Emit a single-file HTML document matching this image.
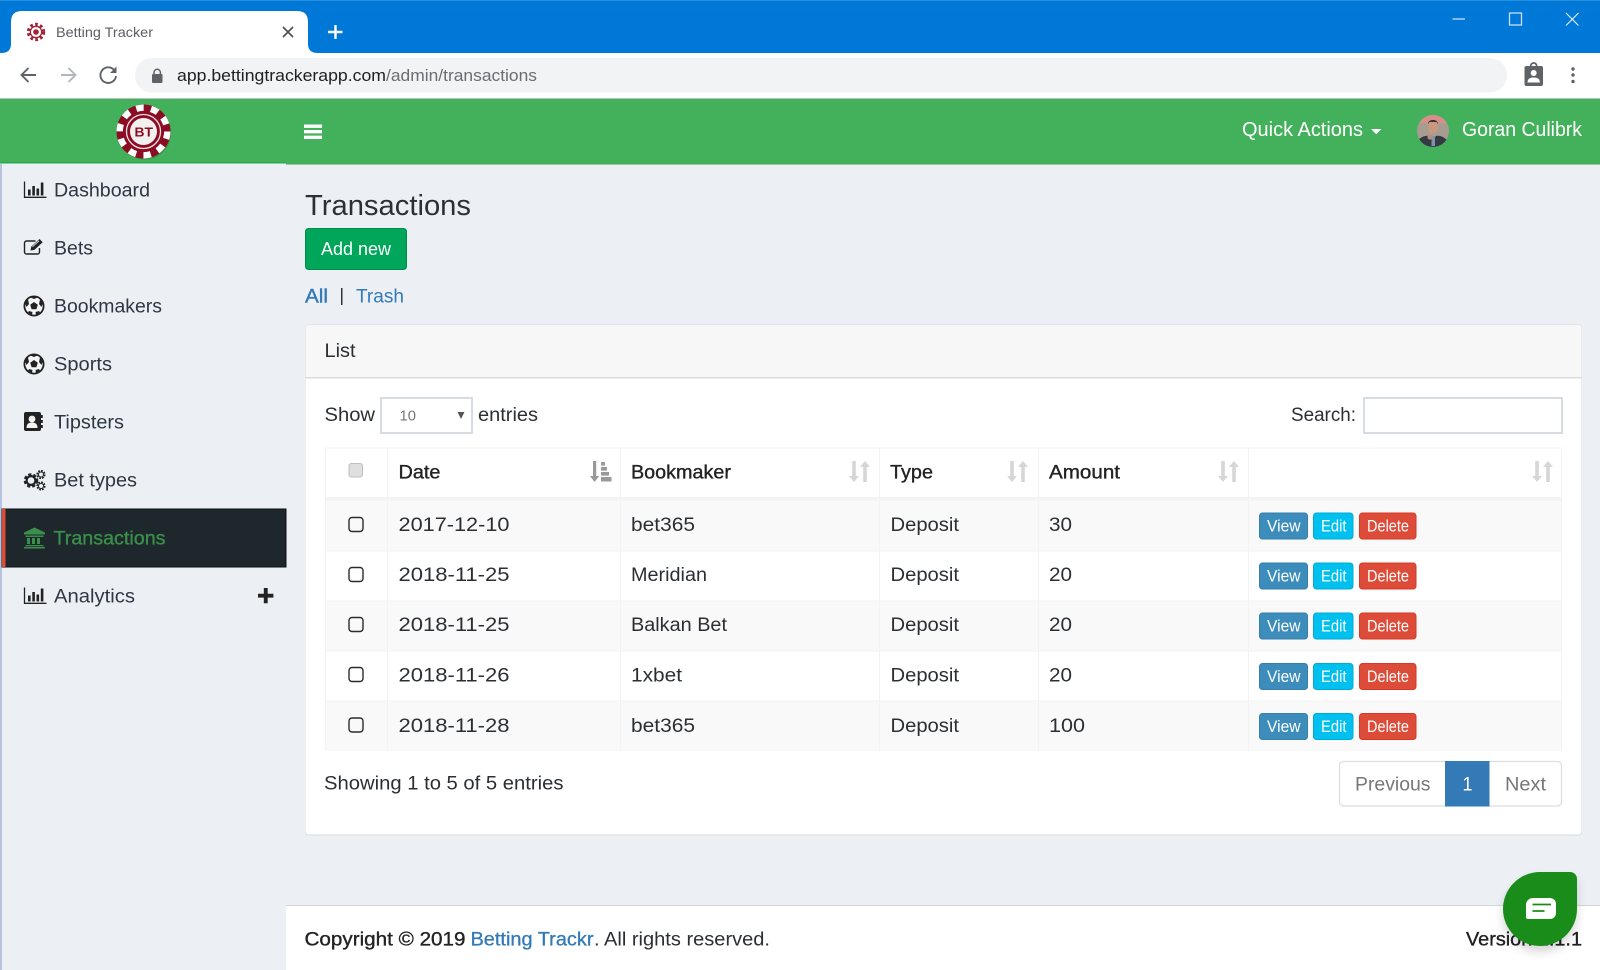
<!DOCTYPE html>
<html lang="en"><head><meta charset="utf-8"><title>Betting Tracker</title>
<style>
html,body{margin:0;padding:0;width:1600px;height:970px;overflow:hidden;background:#ecf0f5}
svg{display:block}
text{font-family:"Liberation Sans",sans-serif;font-size:19px;fill:#2b2f33;white-space:pre}
.s{fill:#2f3742}.w{fill:#fff}.l{fill:#337ab7}.h{stroke:#222;stroke-width:.35px;fill:#222}
.b{font-size:16.5px;fill:#fff}
.ic{fill:#222}
</style></head><body>
<svg width="1600" height="970" viewBox="0 0 1600 970" xmlns="http://www.w3.org/2000/svg">
<defs>
<symbol id="sort" viewBox="0 0 21 21" width="21" height="21">
<path d="M3.2 0h3.6v15h3.2l-5 6-5-6h3.200zM14.200 21h3.600V6H21l-5-6-5 6h3.200z" fill="#d6d6d6"/>
</symbol>
<symbol id="ball" viewBox="0 0 22 22" width="22" height="22">
<circle cx="11" cy="11" r="9.600" fill="#f4f5f7" stroke="#222" stroke-width="1.800"/>
<path d="M11 7l3.800 2.800-1.400 4.500H8.600L7.200 9.800z" fill="#222"/>
<path d="M7.500 2.500L11 4l3.500-1.500L11 1zM2 8l1.500 4L6 9 5 4.500zM20 8l-1.500 4L16 9l1-4.500zM5 17.500l4 2.500 .5-3-3.500-1zM17 17.500L13 20l-.5-3 3.500-1z" fill="#222"/>
</symbol>
<symbol id="chart" viewBox="0 0 23 18" width="23" height="18">
<path d="M1 1v15.800h22" fill="none" stroke="#222" stroke-width="1.300"/>
<path d="M4.500 9h2.600v6H4.500zM8.800 5.500h2.600V15H8.800zM13 8h2.600v7H13zM17.300 2h2.600v13h-2.600z" fill="#222"/>
</symbol>
</defs>

<!-- page base -->
<rect width="1600" height="970" fill="#ecf0f5"/>

<!-- browser chrome -->
<rect width="1600" height="53" fill="#0078d7"/>
<rect width="1600" height="1" fill="#2a8ede"/>
<rect y="53" width="1600" height="45" fill="#fff"/>
<rect y="98" width="1600" height="1" fill="#b9c1bb"/>
<path d="M1 53q10 0 10-9V22q0-11 11-11H297q11 0 11 11V44q0 9 10 9z" fill="#fff"/>
<!-- favicon -->
<g transform="translate(36 32)">
<circle r="7.500" fill="none" stroke="#a2223a" stroke-width="3.400" stroke-dasharray="2.600 2.300"/>
<circle r="5.700" fill="#fff" stroke="#a2223a" stroke-width="1.300"/>
<circle r="2.800" fill="#a2223a"/>
</g>
<text x="56" y="37" textLength="97" lengthAdjust="spacingAndGlyphs" style="font-size:14px;fill:#5a5e63">Betting Tracker</text>
<path d="M283 27l10 10M293 27l-10 10" stroke="#4b4f53" stroke-width="1.600" fill="none"/>
<path d="M335.500 26v14M328 33h14.500" stroke="#fff" stroke-width="2.400" fill="none" transform="translate(0 -1)"/>
<!-- nav icons -->
<path d="M36 75H22M28.500 68l-7 7 7 7" stroke="#5f6368" stroke-width="1.900" fill="none"/>
<path d="M61 75h14M68.500 68l7 7-7 7" stroke="#b4b7ba" stroke-width="1.900" fill="none"/>
<path d="M114.500 70.500A7.800 7.800 0 1 0 116 76" stroke="#5f6368" stroke-width="1.900" fill="none"/>
<path d="M116.500 66.500v6.500H110z" fill="#5f6368"/>
<rect x="135" y="58" width="1372" height="34.500" rx="17" fill="#f1f3f4"/>
<rect x="152" y="74" width="10.500" height="9" rx="1" fill="#5f6368"/>
<path d="M154 74.500v-2a3.200 3.200 0 0 1 6.400 0v2" stroke="#5f6368" stroke-width="1.500" fill="none"/>
<text x="177" y="81" textLength="209" lengthAdjust="spacingAndGlyphs" style="font-size:17px;fill:#202124">app.bettingtrackerapp.com</text>
<text x="386" y="81" textLength="151" lengthAdjust="spacingAndGlyphs" style="font-size:17px;fill:#6a6e73">/admin/transactions</text>
<!-- extension + menu -->
<rect x="1524.500" y="66" width="18.500" height="20" rx="2" fill="#5f6368"/>
<circle cx="1533.700" cy="66" r="3" fill="none" stroke="#5f6368" stroke-width="1.700"/>
<circle cx="1533.700" cy="73" r="3" fill="#fff"/>
<path d="M1527.500 82.500c0-4 3-5 6.200-5s6.200 1 6.200 5z" fill="#fff"/>
<circle cx="1573" cy="69" r="1.700" fill="#5f6368"/><circle cx="1573" cy="75" r="1.700" fill="#5f6368"/><circle cx="1573" cy="81.500" r="1.700" fill="#5f6368"/>
<!-- window controls -->
<path d="M1452.500 19h12.500" stroke="#d5e7f7" stroke-width="1.200"/>
<rect x="1509.500" y="13" width="12" height="12" fill="none" stroke="#c9def2" stroke-width="1.300"/>
<path d="M1566 13l12.500 12.500M1578.500 13L1566 25.500" stroke="#e2eef9" stroke-width="1.200"/>

<!-- app header -->
<rect y="99" width="1600" height="65" fill="#43b15b"/>
<rect y="162" width="286" height="1.500" fill="#29ad4c"/>
<rect y="163.500" width="286" height="2" fill="#ecf0f5"/>
<rect x="286" y="164" width="1314" height="1" fill="#8ed09d"/>
<!-- logo -->
<g transform="translate(143.500 131.500)">
<circle r="26.500" cx="1" cy="1.500" fill="#2a6b3a" opacity=".45"/>
<circle r="27" fill="#8b0d24"/>
<circle r="23.800" fill="none" stroke="#fff" stroke-width="6.400" stroke-dasharray="7.500 7.450"/>
<circle r="19.500" fill="#8b0d24"/>
<circle r="17" fill="none" stroke="#f3dfe2" stroke-width="1.300"/>
<circle r="13.500" fill="#f2efef"/>
</g>
<text x="134.500" y="136.500" textLength="18.500" lengthAdjust="spacingAndGlyphs" style="font-size:13px;font-weight:700;fill:#8b0d24">BT</text>
<!-- hamburger -->
<path d="M304 124.500h18v3.400h-18zM304 130h18v3.400h-18zM304 135.600h18v3.400h-18z" fill="#fff"/>
<text class="w" x="1242" y="136" textLength="121" lengthAdjust="spacingAndGlyphs" style="font-size:20px">Quick Actions</text>
<path d="M1371 129h10.500l-5.250 5.200z" fill="#fff"/>
<!-- avatar -->
<clipPath id="av"><circle cx="1433" cy="131" r="16"/></clipPath>
<g clip-path="url(#av)">
<rect x="1417" y="115" width="32" height="32" fill="#a89c92"/>
<rect x="1417" y="115" width="32" height="8" fill="#d98e8a"/>
<ellipse cx="1433" cy="127" rx="5" ry="6.500" fill="#c79a80"/>
<path d="M1428 124c0-5.500 10-5.500 10 0l-1.500-2h-7z" fill="#3e342e"/>
<path d="M1417 147v-6c4-4 8-6 13-5l3 3 3-3c5-1 9 2 13 6v5z" fill="#333a43"/>
<rect x="1431.500" y="136" width="3.500" height="10" fill="#7e94a6"/>
<circle cx="1430" cy="137" r="2.600" fill="#b98d78"/>
</g>
<text class="w" x="1462" y="136" textLength="120" lengthAdjust="spacingAndGlyphs" style="font-size:20px">Goran Culibrk</text>

<!-- sidebar -->
<rect x="0" y="164" width="2" height="806" fill="#b9c4df"/>
<use href="#chart" x="23.500" y="180.500"/>
<text class="s" x="54" y="196.500" textLength="96" lengthAdjust="spacingAndGlyphs">Dashboard</text>

<path d="M39.500 248v4a2 2 0 0 1-2 2H26.500a2 2 0 0 1-2-2V243a2 2 0 0 1 2-2h9" fill="none" stroke="#222" stroke-width="1.400"/>
<path d="M30.500 250.500l.7-3.800 8.300-7.700 3.200 3.200-8.300 7.700z" fill="#222"/>
<path d="M32.500 246.800l6.500-6" stroke="#ecf0f5" stroke-width=".8" fill="none"/>
<text class="s" x="54" y="254.500" textLength="39" lengthAdjust="spacingAndGlyphs">Bets</text>

<use href="#ball" x="23" y="295"/>
<text class="s" x="54" y="312.500" textLength="108" lengthAdjust="spacingAndGlyphs">Bookmakers</text>

<use href="#ball" x="23" y="353"/>
<text class="s" x="54" y="370.500" textLength="58" lengthAdjust="spacingAndGlyphs">Sports</text>

<rect x="24" y="412" width="17" height="19" rx="2" fill="#222"/>
<path d="M41 415h1.800v3H41zM41 420h1.800v3H41zM41 425h1.800v3H41z" fill="#222"/>
<circle cx="32" cy="419" r="3.400" fill="#f3f3f3"/>
<path d="M26.500 428c0-4.500 2.500-5.500 5.500-5.500s5.500 1 5.500 5.500z" fill="#f3f3f3"/>
<text class="s" x="54" y="428.500" textLength="70" lengthAdjust="spacingAndGlyphs">Tipsters</text>

<g fill="none" stroke="#222">
<circle cx="31" cy="480.500" r="5.800" stroke-width="3" stroke-dasharray="3 1.900"/>
<circle cx="31" cy="480.500" r="4.400" stroke-width="2.200"/>
<circle cx="41" cy="474.500" r="3.700" stroke-width="1.800" stroke-dasharray="1.800 1.100"/>
<circle cx="41" cy="474.500" r="2.500" stroke-width="1"/>
<circle cx="41" cy="486" r="3.700" stroke-width="1.800" stroke-dasharray="1.800 1.100"/>
<circle cx="41" cy="486" r="2.500" stroke-width="1"/>
</g>
<text class="s" x="54" y="486.500" textLength="83" lengthAdjust="spacingAndGlyphs">Bet types</text>

<rect x="2" y="509" width="284" height="58" fill="#1e282c"/>
<path d="M2 509h284v58H2z" fill="none" stroke="#0c1113" stroke-width="1"/>
<rect x="2" y="509" width="3.500" height="58" fill="#dd4b39"/>
<path d="M34.500 527.500l10.500 5v2H24v-2zM25.500 535.500h18v1.500h-18zM27 538h3v6h-3zM32 538h3v6h-3zM37 538h3v6h-3zM25.500 545h18v1.300h-18zM24 547h21v1.500H24z" fill="#3a8f4a"/>
<text x="53.500" y="544.500" textLength="112" lengthAdjust="spacingAndGlyphs" style="fill:#3a8f4a;stroke:#3a8f4a;stroke-width:.35px">Transactions</text>

<use href="#chart" x="23.500" y="586.500"/>
<text class="s" x="54" y="602.500" textLength="81" lengthAdjust="spacingAndGlyphs">Analytics</text>
<path d="M263.800 588h3.900v5.700h5.700v3.900h-5.700v5.700h-3.900v-5.700H258v-3.900h5.800z" fill="#222"/>

<!-- content head -->
<text x="305" y="215" textLength="166" lengthAdjust="spacingAndGlyphs" style="font-size:29px;fill:#2c3036">Transactions</text>
<rect x="305.500" y="228.500" width="101" height="41" rx="3" fill="#00a65a" stroke="#008d4c" stroke-width="1"/>
<text class="w" x="321" y="255" textLength="70" lengthAdjust="spacingAndGlyphs" style="font-size:18px">Add new</text>
<text class="l" x="305" y="302.500" textLength="23" lengthAdjust="spacingAndGlyphs" style="stroke:#337ab7;stroke-width:.4px">All</text>
<rect x="341" y="288" width="1.500" height="17" fill="#333"/>
<text class="l" x="356" y="302.500" textLength="48" lengthAdjust="spacingAndGlyphs">Trash</text>

<!-- card -->
<rect x="305" y="324.500" width="1277" height="511" rx="3" fill="#d9dde3"/>
<rect x="305.500" y="325" width="1276" height="509.500" rx="3" fill="#fff"/>
<path d="M305.500 328a3 3 0 0 1 3-3h1270a3 3 0 0 1 3 3v49H305.500z" fill="#f7f7f7"/>
<rect x="305" y="377" width="1277" height="1.500" fill="#dcdcdc"/>
<text x="324.500" y="357" textLength="31" lengthAdjust="spacingAndGlyphs">List</text>

<text x="324.500" y="421" textLength="50.500" lengthAdjust="spacingAndGlyphs">Show</text>
<rect x="381" y="398" width="91" height="35" fill="#fff" stroke="#d7dbe2" stroke-width="2"/>
<text x="399.500" y="420.500" textLength="16.500" lengthAdjust="spacingAndGlyphs" style="font-size:14.500px;fill:#777">10</text>
<path d="M457.500 412h7l-3.500 7z" fill="#555"/>
<text x="478" y="421" textLength="60" lengthAdjust="spacingAndGlyphs">entries</text>
<text x="1291" y="421" textLength="65" lengthAdjust="spacingAndGlyphs">Search:</text>
<rect x="1364" y="398" width="198" height="35" fill="#fff" stroke="#d7dbe2" stroke-width="2"/>

<!-- table -->
<rect x="325" y="448" width="1237" height="303" fill="#fff"/>
<rect x="325" y="500" width="1237" height="51" fill="#f9f9f9"/>
<rect x="325" y="601" width="1237" height="50" fill="#f9f9f9"/>
<rect x="325" y="701" width="1237" height="50" fill="#f9f9f9"/>
<g fill="#f3f3f3">
<rect x="325" y="447.500" width="1237" height="1"/>
<rect x="325" y="497" width="1237" height="3.500"/>
<rect x="325" y="550.500" width="1237" height="1"/>
<rect x="325" y="600.500" width="1237" height="1"/>
<rect x="325" y="650.500" width="1237" height="1"/>
<rect x="325" y="700.500" width="1237" height="1"/>
<rect x="387" y="448" width="1" height="303"/>
<rect x="620" y="448" width="1" height="303"/>
<rect x="879" y="448" width="1" height="303"/>
<rect x="1038" y="448" width="1" height="303"/>
<rect x="1248" y="448" width="1" height="303"/>
<rect x="325" y="448" width="1" height="303"/>
<rect x="1561" y="448" width="1" height="303"/>
</g>
<!-- header row -->
<rect x="349" y="463.500" width="13.500" height="13.500" rx="2.500" fill="#dfdfdf" stroke="#bdbdbd" stroke-width="1"/>
<text class="h" x="398.500" y="478.500" textLength="42" lengthAdjust="spacingAndGlyphs">Date</text>
<text class="h" x="631" y="478.500" textLength="100" lengthAdjust="spacingAndGlyphs">Bookmaker</text>
<text class="h" x="890" y="478.500" textLength="43" lengthAdjust="spacingAndGlyphs">Type</text>
<text class="h" x="1049" y="478.500" textLength="71" lengthAdjust="spacingAndGlyphs">Amount</text>
<path d="M593 461h3.200v15h3l-4.600 6-4.600-6h3zM601 462h4v3.600h-4zM601 467h6v3.600h-6zM601 472h8v3.600h-8zM601 477h10.500v4.500H601z" fill="#9a9a9a"/>
<use href="#sort" x="849" y="461"/>
<use href="#sort" x="1007" y="461"/>
<use href="#sort" x="1218" y="461"/>
<use href="#sort" x="1532" y="461"/>

<!-- rows -->
<g fill="none" stroke="#2b2b2b" stroke-width="1.400">
<rect x="349" y="517.500" width="14" height="14" rx="3"/>
<rect x="349" y="567.500" width="14" height="14" rx="3"/>
<rect x="349" y="617.500" width="14" height="14" rx="3"/>
<rect x="349" y="667.500" width="14" height="14" rx="3"/>
<rect x="349" y="718" width="14" height="14" rx="3"/>
</g>
<text x="398.500" y="531" textLength="111" lengthAdjust="spacingAndGlyphs">2017-12-10</text>
<text x="631" y="531" textLength="64" lengthAdjust="spacingAndGlyphs">bet365</text>
<text x="890.500" y="531" textLength="68.500" lengthAdjust="spacingAndGlyphs">Deposit</text>
<text x="1049" y="531" textLength="23" lengthAdjust="spacingAndGlyphs">30</text>

<text x="398.500" y="581" textLength="111" lengthAdjust="spacingAndGlyphs">2018-11-25</text>
<text x="631" y="581" textLength="76" lengthAdjust="spacingAndGlyphs">Meridian</text>
<text x="890.500" y="581" textLength="68.500" lengthAdjust="spacingAndGlyphs">Deposit</text>
<text x="1049" y="581" textLength="23" lengthAdjust="spacingAndGlyphs">20</text>

<text x="398.500" y="631" textLength="111" lengthAdjust="spacingAndGlyphs">2018-11-25</text>
<text x="631" y="631" textLength="96" lengthAdjust="spacingAndGlyphs">Balkan Bet</text>
<text x="890.500" y="631" textLength="68.500" lengthAdjust="spacingAndGlyphs">Deposit</text>
<text x="1049" y="631" textLength="23" lengthAdjust="spacingAndGlyphs">20</text>

<text x="398.500" y="681.500" textLength="111" lengthAdjust="spacingAndGlyphs">2018-11-26</text>
<text x="631" y="681.500" textLength="51" lengthAdjust="spacingAndGlyphs">1xbet</text>
<text x="890.500" y="681.500" textLength="68.500" lengthAdjust="spacingAndGlyphs">Deposit</text>
<text x="1049" y="681.500" textLength="23" lengthAdjust="spacingAndGlyphs">20</text>

<text x="398.500" y="732" textLength="111" lengthAdjust="spacingAndGlyphs">2018-11-28</text>
<text x="631" y="732" textLength="64" lengthAdjust="spacingAndGlyphs">bet365</text>
<text x="890.500" y="732" textLength="68.500" lengthAdjust="spacingAndGlyphs">Deposit</text>
<text x="1049" y="732" textLength="36" lengthAdjust="spacingAndGlyphs">100</text>

<!-- action buttons -->
<g stroke-width="1">
<rect x="1259.500" y="513" width="48" height="26" rx="3" fill="#3c8dbc" stroke="#367fa9"/>
<rect x="1313.500" y="513" width="39.500" height="26" rx="3" fill="#00c0ef" stroke="#00acd6"/>
<rect x="1359.500" y="513" width="56.500" height="26" rx="3" fill="#dd4b39" stroke="#d73925"/>
<rect x="1259.500" y="563" width="48" height="26" rx="3" fill="#3c8dbc" stroke="#367fa9"/>
<rect x="1313.500" y="563" width="39.500" height="26" rx="3" fill="#00c0ef" stroke="#00acd6"/>
<rect x="1359.500" y="563" width="56.500" height="26" rx="3" fill="#dd4b39" stroke="#d73925"/>
<rect x="1259.500" y="613" width="48" height="26" rx="3" fill="#3c8dbc" stroke="#367fa9"/>
<rect x="1313.500" y="613" width="39.500" height="26" rx="3" fill="#00c0ef" stroke="#00acd6"/>
<rect x="1359.500" y="613" width="56.500" height="26" rx="3" fill="#dd4b39" stroke="#d73925"/>
<rect x="1259.500" y="663.500" width="48" height="26" rx="3" fill="#3c8dbc" stroke="#367fa9"/>
<rect x="1313.500" y="663.500" width="39.500" height="26" rx="3" fill="#00c0ef" stroke="#00acd6"/>
<rect x="1359.500" y="663.500" width="56.500" height="26" rx="3" fill="#dd4b39" stroke="#d73925"/>
<rect x="1259.500" y="713.500" width="48" height="26" rx="3" fill="#3c8dbc" stroke="#367fa9"/>
<rect x="1313.500" y="713.500" width="39.500" height="26" rx="3" fill="#00c0ef" stroke="#00acd6"/>
<rect x="1359.500" y="713.500" width="56.500" height="26" rx="3" fill="#dd4b39" stroke="#d73925"/>
</g>
<text class="b" x="1267" y="531.500" textLength="33.500" lengthAdjust="spacingAndGlyphs">View</text>
<text class="b" x="1321" y="531.500" textLength="25.500" lengthAdjust="spacingAndGlyphs">Edit</text>
<text class="b" x="1367" y="531.500" textLength="42" lengthAdjust="spacingAndGlyphs">Delete</text>
<text class="b" x="1267" y="581.500" textLength="33.500" lengthAdjust="spacingAndGlyphs">View</text>
<text class="b" x="1321" y="581.500" textLength="25.500" lengthAdjust="spacingAndGlyphs">Edit</text>
<text class="b" x="1367" y="581.500" textLength="42" lengthAdjust="spacingAndGlyphs">Delete</text>
<text class="b" x="1267" y="631.500" textLength="33.500" lengthAdjust="spacingAndGlyphs">View</text>
<text class="b" x="1321" y="631.500" textLength="25.500" lengthAdjust="spacingAndGlyphs">Edit</text>
<text class="b" x="1367" y="631.500" textLength="42" lengthAdjust="spacingAndGlyphs">Delete</text>
<text class="b" x="1267" y="682" textLength="33.500" lengthAdjust="spacingAndGlyphs">View</text>
<text class="b" x="1321" y="682" textLength="25.500" lengthAdjust="spacingAndGlyphs">Edit</text>
<text class="b" x="1367" y="682" textLength="42" lengthAdjust="spacingAndGlyphs">Delete</text>
<text class="b" x="1267" y="732" textLength="33.500" lengthAdjust="spacingAndGlyphs">View</text>
<text class="b" x="1321" y="732" textLength="25.500" lengthAdjust="spacingAndGlyphs">Edit</text>
<text class="b" x="1367" y="732" textLength="42" lengthAdjust="spacingAndGlyphs">Delete</text>

<!-- table footer -->
<text x="324" y="789.500" textLength="239.500" lengthAdjust="spacingAndGlyphs">Showing 1 to 5 of 5 entries</text>
<rect x="1339.500" y="761.500" width="222" height="44.500" rx="4" fill="#fff" stroke="#dddddd" stroke-width="1.200"/>
<rect x="1445" y="761" width="44.500" height="45.500" fill="#337ab7"/>
<text x="1355" y="790.500" textLength="75.500" lengthAdjust="spacingAndGlyphs" style="fill:#777">Previous</text>
<text class="w" x="1462.500" y="790.500" textLength="10" lengthAdjust="spacingAndGlyphs">1</text>
<text x="1505" y="790.500" textLength="41" lengthAdjust="spacingAndGlyphs" style="fill:#777">Next</text>

<!-- footer -->
<rect x="286" y="905" width="1314" height="65" fill="#fff"/>
<rect x="286" y="905" width="1314" height="1" fill="#d2d6de"/>
<text class="h" x="304.500" y="945.500" textLength="161" lengthAdjust="spacingAndGlyphs">Copyright © 2019</text>
<text x="470.500" y="945.500" textLength="123" lengthAdjust="spacingAndGlyphs" style="fill:#337ab7;stroke:#337ab7;stroke-width:.3px">Betting Trackr</text>
<text x="594" y="945.500" textLength="176" lengthAdjust="spacingAndGlyphs">. All rights reserved.</text>
<text class="h" x="1466" y="945.500" textLength="116" lengthAdjust="spacingAndGlyphs">Version 1.1.1</text>

<!-- chat bubble -->
<path d="M1540 878H1570a7 7 0 0 1 7 7V915A37 37 0 1 1 1540 878Z" fill="#000" opacity=".16" style="filter:blur(5px)"/>
<path d="M1540 872H1570a7 7 0 0 1 7 7V909A37 37 0 1 1 1540 872Z" fill="#1a8c19"/>
<path d="M1533 898h17a6 6 0 0 1 6 6v9a6 6 0 0 1-6 6H1528a2 2 0 0 1-2-2v-12a7 7 0 0 1 7-7z" fill="#fff"/>
<path d="M1532.500 904.500h18.500M1532.500 911h12" stroke="#1a8c19" stroke-width="1.800" fill="none"/>
</svg>
</body></html>
